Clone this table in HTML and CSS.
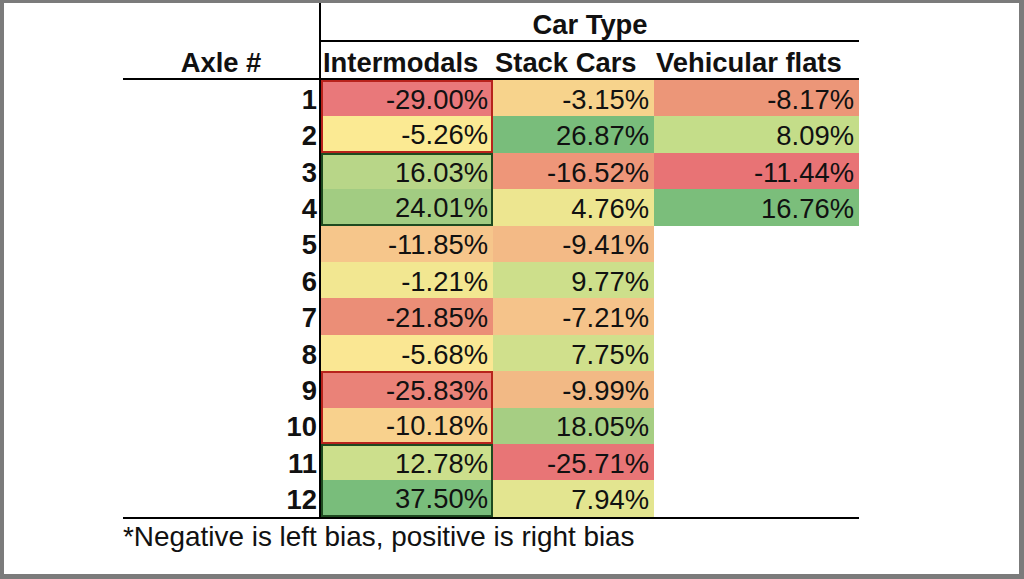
FILE: index.html
```html
<!DOCTYPE html>
<html lang="en">
<head>
<meta charset="utf-8">
<title>Axle bias by car type</title>
<link rel="stylesheet" href="styles.css">
</head>
<body>
<div class="frame">
  <div class="sheet">
    <div class="lab"></div>
    <div class="group">Car Type</div>

    <div class="lab head-lab">Axle #</div>
    <div class="head">Intermodals</div>
    <div class="head">Stack Cars</div>
    <div class="head">Vehicular flats</div>

    <div class="lab">1</div>
    <div class="val box-red top" style="background:#E9787A">-29.00%</div>
    <div class="val" style="background:#F7D38C">-3.15%</div>
    <div class="val" style="background:#EC9678">-8.17%</div>

    <div class="lab">2</div>
    <div class="val box-red bottom" style="background:#FBEA93">-5.26%</div>
    <div class="val" style="background:#79BD7B">26.87%</div>
    <div class="val" style="background:#C4DD89">8.09%</div>

    <div class="lab">3</div>
    <div class="val box-green top" style="background:#B8D688">16.03%</div>
    <div class="val" style="background:#EE9679">-16.52%</div>
    <div class="val" style="background:#E87375">-11.44%</div>

    <div class="lab">4</div>
    <div class="val box-green bottom" style="background:#A2CC82">24.01%</div>
    <div class="val" style="background:#EDE690">4.76%</div>
    <div class="val" style="background:#7BBE7B">16.76%</div>

    <div class="lab">5</div>
    <div class="val" style="background:#F6C68B">-11.85%</div>
    <div class="val" style="background:#F3BA86">-9.41%</div>
    <div class="val empty"></div>

    <div class="lab">6</div>
    <div class="val" style="background:#F2E791">-1.21%</div>
    <div class="val" style="background:#CDDF8B">9.77%</div>
    <div class="val empty"></div>

    <div class="lab">7</div>
    <div class="val" style="background:#EB8E77">-21.85%</div>
    <div class="val" style="background:#F5C38A">-7.21%</div>
    <div class="val empty"></div>

    <div class="lab">8</div>
    <div class="val" style="background:#FAE793">-5.68%</div>
    <div class="val" style="background:#D0E08C">7.75%</div>
    <div class="val empty"></div>

    <div class="lab">9</div>
    <div class="val box-red top" style="background:#EA8278">-25.83%</div>
    <div class="val" style="background:#F2B985">-9.99%</div>
    <div class="val empty"></div>

    <div class="lab">10</div>
    <div class="val box-red bottom" style="background:#F8D18D">-10.18%</div>
    <div class="val" style="background:#A6CE83">18.05%</div>
    <div class="val empty"></div>

    <div class="lab">11</div>
    <div class="val box-green top" style="background:#CCDF8C">12.78%</div>
    <div class="val" style="background:#E87576">-25.71%</div>
    <div class="val empty"></div>

    <div class="lab">12</div>
    <div class="val box-green bottom" style="background:#79BD7B">37.50%</div>
    <div class="val" style="background:#E3E590">7.94%</div>
    <div class="val empty"></div>
  </div>
  <p class="note">*Negative is left bias, positive is right bias</p>
</div>
</body>
</html>
```

FILE: styles.css
```css
* { box-sizing: border-box; }

html, body {
  margin: 0;
  padding: 0;
  background: #ffffff;
  overflow: hidden;
}

.frame {
  width: 1024px;
  height: 579px;
  border-style: solid;
  border-color: #7b7b7b;
  border-width: 3px 5px 5px 4px;
  padding-left: 119px;
  background: #ffffff;
  font-family: "Liberation Sans", Arial, sans-serif;
  font-size: 27.4px;
  color: #111111;
}

.sheet {
  display: grid;
  grid-template-columns: 198px 172px 161px 205px;
  grid-template-rows: 39px 38px repeat(12, 36.42px);
  width: max-content;
  border-bottom: 2px solid #000000;
  line-height: 30px;
}

.lab {
  border-right: 2px solid #000000;
  font-weight: bold;
  display: flex;
  align-items: center;
  justify-content: flex-end;
  padding-right: 2px;
  padding-top: 3px;
}

.group {
  grid-column: 2 / span 3;
  border-bottom: 2px solid #000000;
  font-weight: bold;
  display: flex;
  align-items: flex-end;
  justify-content: center;
}

.head-lab {
  border-bottom: 2px solid #000000;
  align-items: flex-end;
  justify-content: center;
  padding-right: 0;
  padding-top: 0;
}

.head {
  border-bottom: 2px solid #000000;
  font-weight: bold;
  display: flex;
  align-items: flex-end;
  padding-left: 2px;
  white-space: nowrap;
}

.val {
  display: flex;
  align-items: center;
  justify-content: flex-end;
  padding-right: 5px;
  padding-top: 3px;
}

.empty { background: #ffffff; }

.box-red { border: 2px solid #B8231C; padding-right: 3px; }
.box-green { border: 2px solid #1E4A20; padding-right: 3px; }
.box-red.top, .box-green.top { border-bottom: 0; padding-top: 1px; }
.box-red.bottom, .box-green.bottom { border-top: 0; }

.note {
  margin: 3px 0 0 0;
  line-height: 30px;
  font-size: 27.9px;
}
```
